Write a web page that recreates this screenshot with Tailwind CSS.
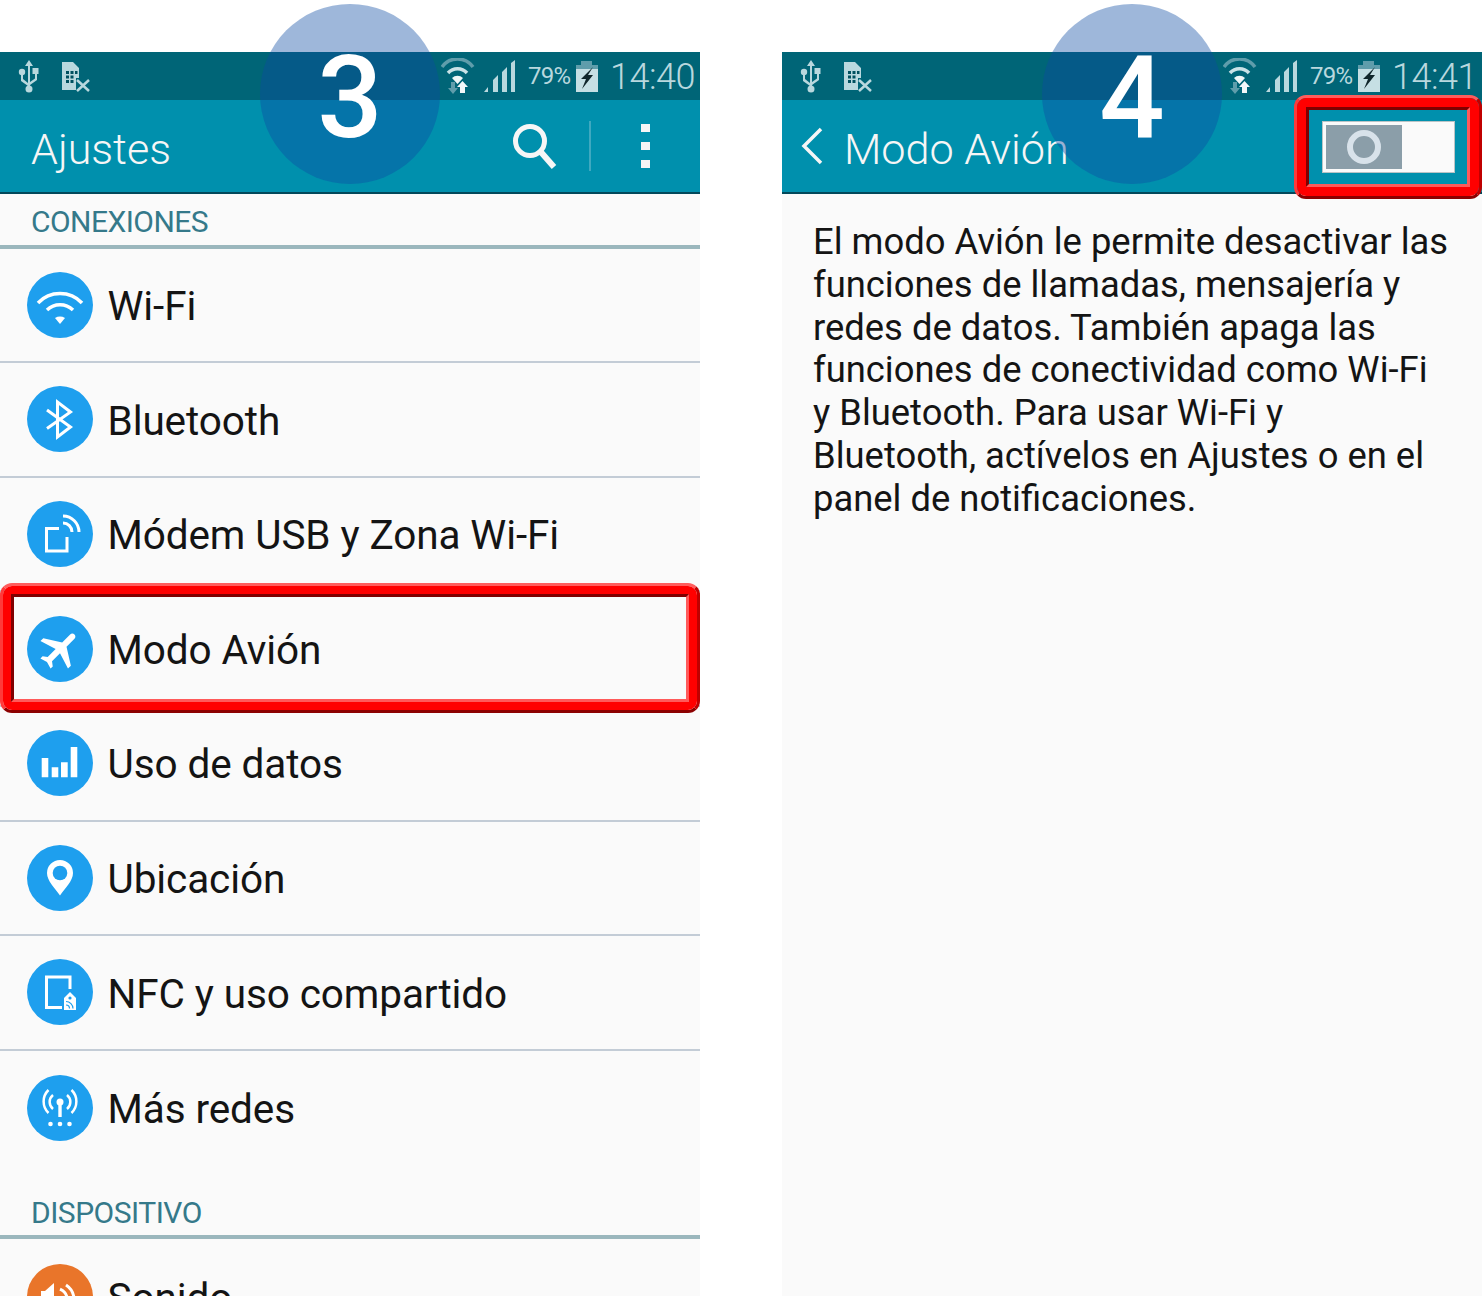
<!DOCTYPE html>
<html lang="es">
<head>
<meta charset="utf-8">
<script src="https://cdn.jsdelivr.net/npm/@tailwindcss/browser@4"></script>
</head>
<body class="bg-white">
<div class="w-[1482px] h-[1296px] overflow-hidden flex gap-[82px] font-['Roboto',sans-serif] bg-white">

<!-- LEFT PHONE -->
<section class="relative w-[700px] h-[1296px] pt-[52px] shrink-0">
  <div class="h-[1244px] overflow-hidden bg-[#fafafa]">
    <div class="h-[48px] bg-[#006577] flex items-center justify-between text-[#b9d8de]">
      <div class="flex items-center pl-[18px] gap-[21px]">
        <svg class="w-[22px] h-[34px]" viewBox="0 0 22 34"><path d="M11 1l-4 6h3v20h2V7h3z M3 15h2v5l5 4v3l-7-5z M19 14v7l-7 5v-3l5-3.500V14z" fill="currentColor"/><circle cx="4" cy="13" r="3.200" fill="currentColor"/><rect x="14.500" y="9" width="6" height="6" fill="currentColor"/><circle cx="11" cy="30" r="3.500" fill="currentColor"/></svg>
        <svg class="w-[30px] h-[32px]" viewBox="0 0 30 32"><path d="M1 2H12L18 8V18H15V30H1Z" fill="currentColor"/><path d="M5 11h3v3H5zM9.500 11h3v3h-3zM14 11h2.500v3H14zM5 15.500h3v3H5zM9.500 15.500h3v3h-3zM5 20h3v3H5zM9.500 20h3v3h-3z" fill="#00505f"/><path d="M16 20L28 31M28 20L16 31" stroke="currentColor" stroke-width="2.500" fill="none"/></svg>
      </div>
      <div class="flex items-center pr-[5px]">
        <svg class="w-[34px] h-[36px] mr-[9px]" viewBox="0 0 34 36"><path d="M1 9A19 19 0 0 1 32 9" stroke="#5f9dab" stroke-width="3.500" fill="none"/><path d="M7 15A13 13 0 0 1 26 15" stroke="#c9e2e7" stroke-width="3.500" fill="none"/><path d="M11 20A8 8 0 0 1 22 20L16.500 26z" fill="#eef6f7"/><path d="M10 24h4v6h3l-5 6-5-6h3z" fill="#5f9dab"/><path d="M19 29h-3l5.500-6 5.500 6h-3v6h-5z" fill="#f3f8f9"/></svg>
        <svg class="w-[32px] h-[32px] mr-[12px]" viewBox="0 0 32 32"><path d="M0 32l4-5v5zM9 32V20l5-5v17zM18 32V12l5-5v25zM27 32V3l4-3v32z" fill="currentColor"/></svg>
        <span class="text-[24px] leading-none tracking-[-0.8px] w-[43px] mr-[5px]">79%</span>
        <svg class="w-[22px] h-[31px] mr-[12px]" viewBox="0 0 22 31"><path d="M5 0h11v4h6v4H0V4h5z" fill="#5f9dab"/><rect y="8" width="22" height="23" fill="#c6dfe4"/><path d="M17 6L5 18h5L6 28l11-14h-5z" fill="#10262b"/></svg>
        <span class="text-[36px] leading-none font-light tracking-[-0.5px] pt-[2px]">14:40</span>
      </div>
    </div>
    <header class="h-[94px] bg-[#0090ad] border-b-2 border-[#02485a] flex items-center justify-between text-[#f6f6f6]">
      <h1 class="pl-[31px] pt-[6px] text-[43px] font-light leading-none">Ajustes</h1>
      <div class="flex items-center">
        <svg class="w-[48px] h-[48px] mr-[30px]" viewBox="0 0 48 48"><circle cx="19" cy="19" r="14.500" stroke="currentColor" stroke-width="5" fill="none"/><path d="M29 29l14 16" stroke="currentColor" stroke-width="6" fill="none"/></svg>
        <div class="w-[2px] h-[50px] bg-[#3fa9c0] mr-[50px]"></div>
        <div class="flex flex-col gap-[10px] mr-[50px]">
          <div class="w-[9px] h-[8px] bg-[#f6f6f6]"></div>
          <div class="w-[9px] h-[8px] bg-[#f6f6f6]"></div>
          <div class="w-[9px] h-[8px] bg-[#f6f6f6]"></div>
        </div>
      </div>
    </header>
    <div class="h-[54.600px] border-b-4 border-[#9bb7bd] pl-[31px] pt-[6px] flex items-center text-[#35798a] text-[30px] leading-none tracking-[-0.55px]">CONEXIONES</div>

    <a class="h-[114.6px] border-b-2 border-[#c3ccd6] flex items-center pl-[26.500px] gap-[15px] text-[#141414] text-[40.500px] tracking-[-0.1px]">
      <svg class="w-[66px] h-[66px] shrink-0" viewBox="0 0 66 66"><circle cx="33" cy="33" r="33" fill="#1e9fee"/><path d="M11 31A30.400 30.400 0 0 1 55 31" stroke="#fff" stroke-width="3.500" fill="none"/><path d="M20 38A19 19 0 0 1 46 38" stroke="#fff" stroke-width="3.500" fill="none"/><path d="M28 46A10 10 0 0 1 38 46L33 52z" fill="#fff"/></svg>
      <span class="pt-[3px]">Wi-Fi</span>
    </a>
    <a class="h-[114.6px] border-b-2 border-[#c3ccd6] flex items-center pl-[26.500px] gap-[15px] text-[#141414] text-[40.500px] tracking-[-0.1px]">
      <svg class="w-[66px] h-[66px] shrink-0" viewBox="0 0 66 66"><circle cx="33" cy="33" r="33" fill="#1e9fee"/><path d="M20 24L43.500 41 30.500 51V16L43.500 26 20 42.500" stroke="#fff" stroke-width="3" fill="none"/></svg>
      <span class="pt-[3px]">Bluetooth</span>
    </a>
    <a class="h-[114.6px] border-b-2 border-[#c3ccd6] flex items-center pl-[26.500px] gap-[15px] text-[#141414] text-[40.500px] tracking-[-0.1px]">
      <svg class="w-[66px] h-[66px] shrink-0" viewBox="0 0 66 66"><circle cx="33" cy="33" r="33" fill="#1e9fee"/><path d="M32 27.500H19.500V50H40V36" stroke="#fff" stroke-width="3" fill="none"/><path d="M36 15A16 16 0 0 1 52 31M36 22A9 9 0 0 1 45 31" stroke="#fff" stroke-width="3" fill="none"/></svg>
      <span class="pt-[3px]">Módem USB y Zona Wi-Fi</span>
    </a>
    <a class="h-[114.6px] border-b-2 border-[#c3ccd6] flex items-center pl-[26.500px] gap-[15px] text-[#141414] text-[40.500px] tracking-[-0.1px]">
      <svg class="w-[66px] h-[66px] shrink-0" viewBox="0 0 66 66"><circle cx="33" cy="33" r="33" fill="#1e9fee"/><path transform="translate(33 33) rotate(45) scale(2.050) translate(-11.500 -12)" d="M21 16v-2l-8-5V3.500c0-.83-.67-1.500-1.500-1.500S10 2.670 10 3.500V9l-8 5v2l8-2.500V19l-2 1.500V22l3.500-1 3.500 1v-1.500L13 19v-5.500l8 2.500z" fill="#fff"/></svg>
      <span class="pt-[3px]">Modo Avión</span>
    </a>
    <a class="h-[114.6px] border-b-2 border-[#c3ccd6] flex items-center pl-[26.500px] gap-[15px] text-[#141414] text-[40.500px] tracking-[-0.1px]">
      <svg class="w-[66px] h-[66px] shrink-0" viewBox="0 0 66 66"><circle cx="33" cy="33" r="33" fill="#1e9fee"/><path d="M14.700 28h6.600v19.300h-6.600zM24.700 37.300h6.600v10h-6.600zM34 32.300h6.700v15H34zM43.700 17h6.600v30.300h-6.600z" fill="#fff"/></svg>
      <span class="pt-[3px]">Uso de datos</span>
    </a>
    <a class="h-[114.6px] border-b-2 border-[#c3ccd6] flex items-center pl-[26.500px] gap-[15px] text-[#141414] text-[40.500px] tracking-[-0.1px]">
      <svg class="w-[66px] h-[66px] shrink-0" viewBox="0 0 66 66"><circle cx="33" cy="33" r="33" fill="#1e9fee"/><path d="M33 50.500C28 43 20 36 20 28a13 13 0 0 1 26 0C46 36 38 43 33 50.500z" fill="#fff"/><circle cx="33" cy="28" r="7.300" fill="#1e9fee"/></svg>
      <span class="pt-[3px]">Ubicación</span>
    </a>
    <a class="h-[114.6px] border-b-2 border-[#c3ccd6] flex items-center pl-[26.500px] gap-[15px] text-[#141414] text-[40.500px] tracking-[-0.1px]">
      <svg class="w-[66px] h-[66px] shrink-0" viewBox="0 0 66 66"><circle cx="33" cy="33" r="33" fill="#1e9fee"/><path d="M43 30V18H19.500V48.500H35" stroke="#fff" stroke-width="3" fill="none"/><path d="M43 33l6 6v12H37V39z" fill="#fff"/><circle cx="43" cy="39" r="1.600" fill="#1e9fee"/><path d="M39 42.500a7 7 0 0 1 7 7M39 46a3.500 3.500 0 0 1 3.500 3.500" stroke="#1e9fee" stroke-width="1.200" fill="none"/></svg>
      <span class="pt-[3px]">NFC y uso compartido</span>
    </a>
    <a class="h-[114.6px] flex items-center pl-[26.500px] gap-[15px] text-[#141414] text-[40.500px] tracking-[-0.1px]">
      <svg class="w-[66px] h-[66px] shrink-0" viewBox="0 0 66 66"><circle cx="33" cy="33" r="33" fill="#1e9fee"/><circle cx="33" cy="27" r="3.500" fill="#fff"/><path d="M31.300 28h3.400v14h-3.400z" fill="#fff"/><path d="M26 20a9 9 0 0 0 0 14M40 20a9 9 0 0 1 0 14M21.500 15a16 16 0 0 0 0 23M44.500 15a16 16 0 0 1 0 23" stroke="#fff" stroke-width="2.500" fill="none"/><circle cx="23.500" cy="49" r="2.300" fill="#fff"/><circle cx="33" cy="49" r="2.300" fill="#fff"/><circle cx="42.500" cy="49" r="2.300" fill="#fff"/></svg>
      <span class="pt-[3px]">Más redes</span>
    </a>
    <div class="h-[74px] border-b-4 border-[#9bb7bd] pl-[31px] flex items-end pb-[7px] text-[#35798a] text-[30px] leading-none tracking-[-0.5px]">DISPOSITIVO</div>
    <a class="h-[114.6px] flex items-center pl-[26.500px] gap-[15px] text-[#141414] text-[40.500px] tracking-[-0.1px]">
      <svg class="w-[66px] h-[66px] shrink-0" viewBox="0 0 66 66"><circle cx="33" cy="33" r="33" fill="#e9752a"/><path d="M27 19L18 27H14V46H18L27 54Z" fill="#fff"/><path d="M33 25a12 12 0 0 1 0 22M39 21a18 18 0 0 1 0 30" stroke="#fff" stroke-width="3" fill="none"/></svg>
      <span class="pt-[3px]">Sonido</span>
    </a>
  </div>

  <!-- red frame -->
  <div class="absolute left-0 top-[583px] w-[700px] h-[130px] rounded-[12px] border-[3px] border-t-[#ff5c5c] border-l-[#ff3a3a] border-r-[#c00000] border-b-[#8c0000]">
    <div class="w-full h-full rounded-[9px] border-[8px] border-[#ff0000]">
      <div class="w-full h-full border-[3px] border-t-[#800000] border-l-[#800000] border-r-[#ff5a5a] border-b-[#ff5a5a]"></div>
    </div>
  </div>
  <!-- number bubble -->
  <div class="absolute left-[260px] top-[4px] w-[180px] h-[180px] rounded-full bg-[#0c4aa3]/40 flex items-center justify-center pt-[6px] text-white text-[115px] font-medium leading-none">3</div>
</section>

<!-- RIGHT PHONE -->
<section class="relative w-[700px] h-[1296px] pt-[52px] shrink-0">
  <div class="h-[1244px] overflow-hidden bg-[#fafafa]">
    <div class="h-[48px] bg-[#006577] flex items-center justify-between text-[#b9d8de]">
      <div class="flex items-center pl-[18px] gap-[21px]">
        <svg class="w-[22px] h-[34px]" viewBox="0 0 22 34"><path d="M11 1l-4 6h3v20h2V7h3z M3 15h2v5l5 4v3l-7-5z M19 14v7l-7 5v-3l5-3.500V14z" fill="currentColor"/><circle cx="4" cy="13" r="3.200" fill="currentColor"/><rect x="14.500" y="9" width="6" height="6" fill="currentColor"/><circle cx="11" cy="30" r="3.500" fill="currentColor"/></svg>
        <svg class="w-[30px] h-[32px]" viewBox="0 0 30 32"><path d="M1 2H12L18 8V18H15V30H1Z" fill="currentColor"/><path d="M5 11h3v3H5zM9.500 11h3v3h-3zM14 11h2.500v3H14zM5 15.500h3v3H5zM9.500 15.500h3v3h-3zM5 20h3v3H5zM9.500 20h3v3h-3z" fill="#00505f"/><path d="M16 20L28 31M28 20L16 31" stroke="currentColor" stroke-width="2.500" fill="none"/></svg>
      </div>
      <div class="flex items-center pr-[5px]">
        <svg class="w-[34px] h-[36px] mr-[9px]" viewBox="0 0 34 36"><path d="M1 9A19 19 0 0 1 32 9" stroke="#5f9dab" stroke-width="3.500" fill="none"/><path d="M7 15A13 13 0 0 1 26 15" stroke="#c9e2e7" stroke-width="3.500" fill="none"/><path d="M11 20A8 8 0 0 1 22 20L16.500 26z" fill="#eef6f7"/><path d="M10 24h4v6h3l-5 6-5-6h3z" fill="#5f9dab"/><path d="M19 29h-3l5.500-6 5.500 6h-3v6h-5z" fill="#f3f8f9"/></svg>
        <svg class="w-[32px] h-[32px] mr-[12px]" viewBox="0 0 32 32"><path d="M0 32l4-5v5zM9 32V20l5-5v17zM18 32V12l5-5v25zM27 32V3l4-3v32z" fill="currentColor"/></svg>
        <span class="text-[24px] leading-none tracking-[-0.8px] w-[43px] mr-[5px]">79%</span>
        <svg class="w-[22px] h-[31px] mr-[12px]" viewBox="0 0 22 31"><path d="M5 0h11v4h6v4H0V4h5z" fill="#5f9dab"/><rect y="8" width="22" height="23" fill="#c6dfe4"/><path d="M17 6L5 18h5L6 28l11-14h-5z" fill="#10262b"/></svg>
        <span class="text-[36px] leading-none font-light tracking-[-0.5px] pt-[2px]">14:41</span>
      </div>
    </div>
    <header class="h-[94px] bg-[#0090ad] border-b-2 border-[#02485a] flex items-center text-[#f6f6f6]">
      <svg class="w-[24px] h-[40px] ml-[18px] mr-[20px]" viewBox="0 0 24 40"><path d="M21 3L4 20l17 17" stroke="currentColor" stroke-width="3.500" fill="none"/></svg>
      <h1 class="pt-[8px] text-[43.200px] font-light leading-none">Modo Avión</h1>
    </header>
    <p class="pl-[31px] pt-[27px] text-[36.400px] leading-[42.800px] text-[#141414]">El modo Avión le permite desactivar las<br>funciones de llamadas, mensajería y<br>redes de datos. También apaga las<br>funciones de conectividad como Wi-Fi<br>y Bluetooth. Para usar Wi-Fi y<br>Bluetooth, actívelos en Ajustes o en el<br>panel de notificaciones.</p>
  </div>

  <!-- toggle -->
  <div class="absolute left-[540px] top-[121px] w-[133px] h-[52px] border border-[#b9c4c6] bg-[#fafafa] p-[3px]">
    <div class="w-[76px] h-full bg-[#8b9ea9] flex items-center justify-center">
      <div class="w-[34px] h-[34px] rounded-full border-[6px] border-[#d8e2ea]"></div>
    </div>
  </div>
  <!-- red frame -->
  <div class="absolute left-[512px] top-[95px] w-[188px] h-[104px] rounded-[12px] border-[3px] border-t-[#ff5c5c] border-l-[#ff3a3a] border-r-[#c00000] border-b-[#8c0000]">
    <div class="w-full h-full rounded-[9px] border-[9px] border-[#ff0000]">
      <div class="w-full h-full border-[3px] border-t-[#800000] border-l-[#800000] border-r-[#ff5a5a] border-b-[#ff5a5a]"></div>
    </div>
  </div>
  <!-- number bubble -->
  <div class="absolute left-[260px] top-[4px] w-[180px] h-[180px] rounded-full bg-[#0c4aa3]/40 flex items-center justify-center pt-[6px] text-white text-[115px] font-medium leading-none">4</div>
</section>

</div>
</body>
</html>
